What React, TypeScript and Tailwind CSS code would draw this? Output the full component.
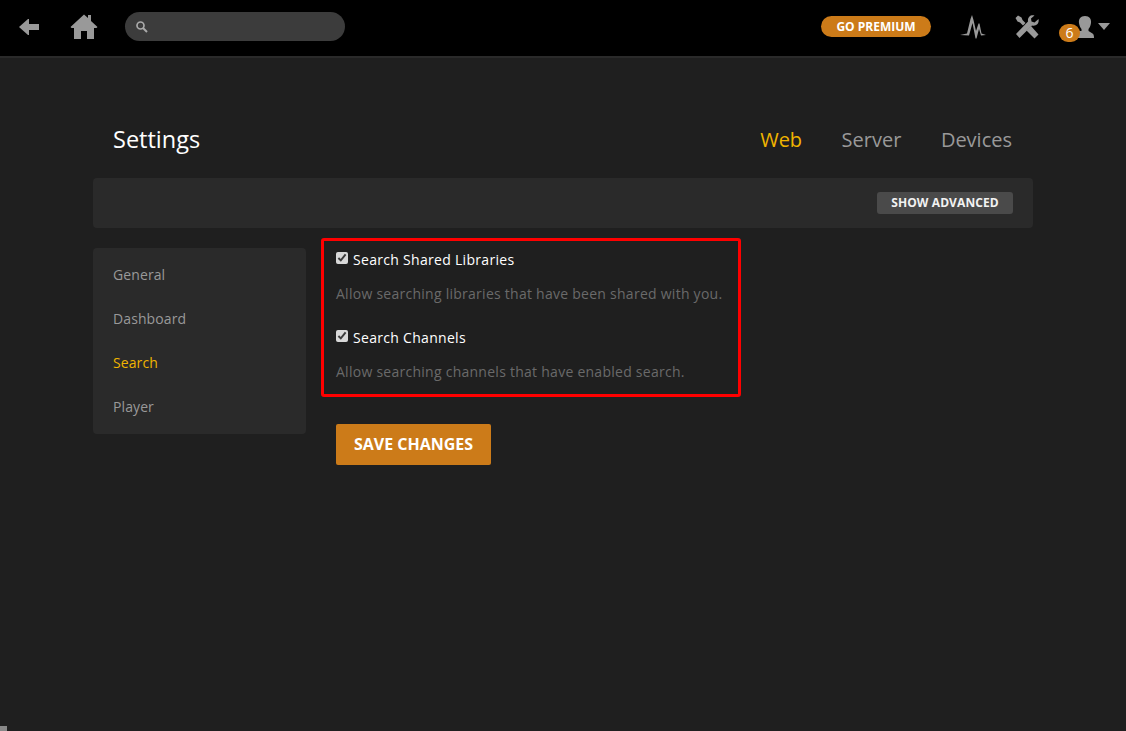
const sideItems = ["General", "Dashboard", "Search", "Player"];

function BackIcon() {
  return (
    <svg width="20" height="16" viewBox="0 0 20 16" className="fill-[#999]">
      <path d="M0 8 L9 0 H10 V5 H20 V11 H10 V16 H9 Z" />
    </svg>
  );
}

function HomeIcon() {
  return (
    <svg width="28" height="26" viewBox="0 0 28 26" className="fill-[#999]">
      <path d="M14 0.5 L18 4 V1 H21 V7 L27.5 13 L26.5 14 H24 V25 H17 V17 H11 V25 H4 V14 H1.5 L0.5 13 Z" />
    </svg>
  );
}

function ActivityIcon() {
  return (
    <svg width="28" height="26" viewBox="0 0 28 26" className="fill-[#999]">
      <path d="M1 21 L8 19.5 L11.5 5 L13 1 L14.5 6 L17 17 L19.5 9.5 L20.5 9.5 L22.5 19.5 L27 21 L22 21.5 L20 15 L17.5 24.5 L16.5 24.5 L13.5 9 L10 21.5 Z" />
    </svg>
  );
}

function ToolsIcon() {
  return (
    <svg width="24" height="24" viewBox="0 0 24 24" className="fill-[#999]">
      <path d="M0.5 3 L3 0.5 L6.5 2.5 L7.5 5 L10.5 8 L8 10.5 L5 7.5 L2.5 6.5 Z" />
      <path d="M13.5 13.5 L16 11 L23.5 19.5 L19.5 23.5 L11.5 15.5 Z" />
      <path d="M23.5 4 L19.5 7.5 L16.5 6.5 L16 3.5 L19.5 0.5 C15.5 -0.5 12.5 2 13 6.5 L1 19 L4.5 23 L17 10.5 C21.5 11.5 24.5 8 23.5 4 Z" />
    </svg>
  );
}

function UserIcon() {
  return (
    <svg width="22" height="24" viewBox="0 0 22 24" className="fill-[#999]">
      <path d="M13 1 C17.5 1 19.5 4 19 8 C18.6 11 17.5 13 16.5 14 V16 L20.5 18.5 C21.5 19.1 22 20.5 22 23 H2 L6 16 H9.5 V14 C8.5 13 7.4 11 7 8 C6.5 4 8.5 1 13 1 Z" />
    </svg>
  );
}

function SettingRow({ label, help }: { label: string; help: string }) {
  return (
    <div className="h-[78px]">
      <label className="flex items-start h-[36px] pt-[2px]">
        <input type="checkbox" defaultChecked className="w-[12px] h-[12px] mt-[3px] mr-[5px] accent-[#d8d8d8]" />
        <span className="text-[14px] leading-[22px] text-white tracking-[0.3px]">{label}</span>
      </label>
      <p className="text-[14px] leading-[22px] text-[#6a6a6a] tracking-[0.26px] whitespace-nowrap">{help}</p>
    </div>
  );
}

export default function App() {
  return (
    <div className="relative min-h-screen h-[731px] overflow-hidden bg-[#1f1f1f] font-['Open_Sans',sans-serif]">
      <header className="flex items-center h-[58px] bg-black border-b-2 border-[#2a2a2a] pb-[3px] pl-[19px] pr-[16px]">
        <BackIcon />
        <div className="ml-[31px]">
          <HomeIcon />
        </div>
        <div className="flex items-center ml-[27px] w-[220px] h-[29px] rounded-full bg-[#3c3c3c] pl-[10px]">
          <svg width="13" height="13" viewBox="0 0 13 13" fill="none" className="stroke-[#aaa]">
            <circle cx="5.5" cy="5.5" r="3.5" strokeWidth="1.7" />
            <path d="M8 8 L12 12" strokeWidth="2" />
          </svg>
        </div>
        <div className="ml-auto flex items-center">
          <span className="flex items-center justify-center w-[110px] h-[21px] rounded-full bg-[#cc7b19] text-white font-bold text-[12px]">
            GO PREMIUM
          </span>
          <div className="ml-[28px]">
            <ActivityIcon />
          </div>
          <div className="ml-[28px]">
            <ToolsIcon />
          </div>
          <div className="relative ml-[33px] flex items-center">
            <UserIcon />
            <span className="absolute left-[-13px] top-[9px] flex items-center justify-center w-[21px] h-[18px] rounded-full bg-[#cc7b19] text-white text-[14px]">
              6
            </span>
            <span className="ml-[4px] w-0 h-0 border-x-[6px] border-x-transparent border-t-[7px] border-t-[#999]" />
          </div>
        </div>
      </header>

      <main className="w-[940px] ml-[93px]">
        <div className="flex items-center justify-between h-[120px] pl-[20px] pr-[21px] pt-[61px] pb-[17px]">
          <h1 className="text-[23.5px] text-white">Settings</h1>
          <nav className="flex gap-[39.5px] text-[20px] text-[#999]">
            <span className="text-[#f0b400]">Web</span>
            <span>Server</span>
            <span>Devices</span>
          </nav>
        </div>

        <div className="flex items-center justify-end h-[50px] px-[20px] rounded bg-[#2a2a2a]">
          <span className="flex items-center justify-center w-[136px] h-[22px] rounded-[3px] bg-[#4a4a4a] text-[#f2f2f2] font-bold text-[12px] tracking-[0.1px]">
            SHOW ADVANCED
          </span>
        </div>

        <div className="flex items-start mt-[10px]">
          <aside className="w-[213px] mt-[10px] pt-[4px] pb-[6px] rounded bg-[#2a2a2a]">
            {sideItems.map((item) => (
              <div
                key={item}
                className={`h-[44px] px-[20px] flex items-center text-[14px] tracking-[0.1px] ${item === "Search" ? "text-[#f0b400]" : "text-[#999]"}`}
              >
                {item}
              </div>
            ))}
          </aside>

          <div className="ml-[15px]">
            <div className="w-[420px] h-[159px] border-[3px] border-[#ff0000] rounded-[3px] pl-[12px] pt-[6px]">
              <SettingRow label="Search Shared Libraries" help="Allow searching libraries that have been shared with you." />
              <SettingRow label="Search Channels" help="Allow searching channels that have enabled search." />
            </div>
            <button className="flex items-center justify-center ml-[15px] mt-[27px] pb-[1px] w-[155px] h-[41px] rounded-[2px] bg-[#cc7b19] text-white font-bold text-[16px]">
              SAVE CHANGES
            </button>
          </div>
        </div>
      </main>

      <div className="absolute left-0 bottom-0 w-[7px] h-[5px] bg-[#888]" />
    </div>
  );
}
